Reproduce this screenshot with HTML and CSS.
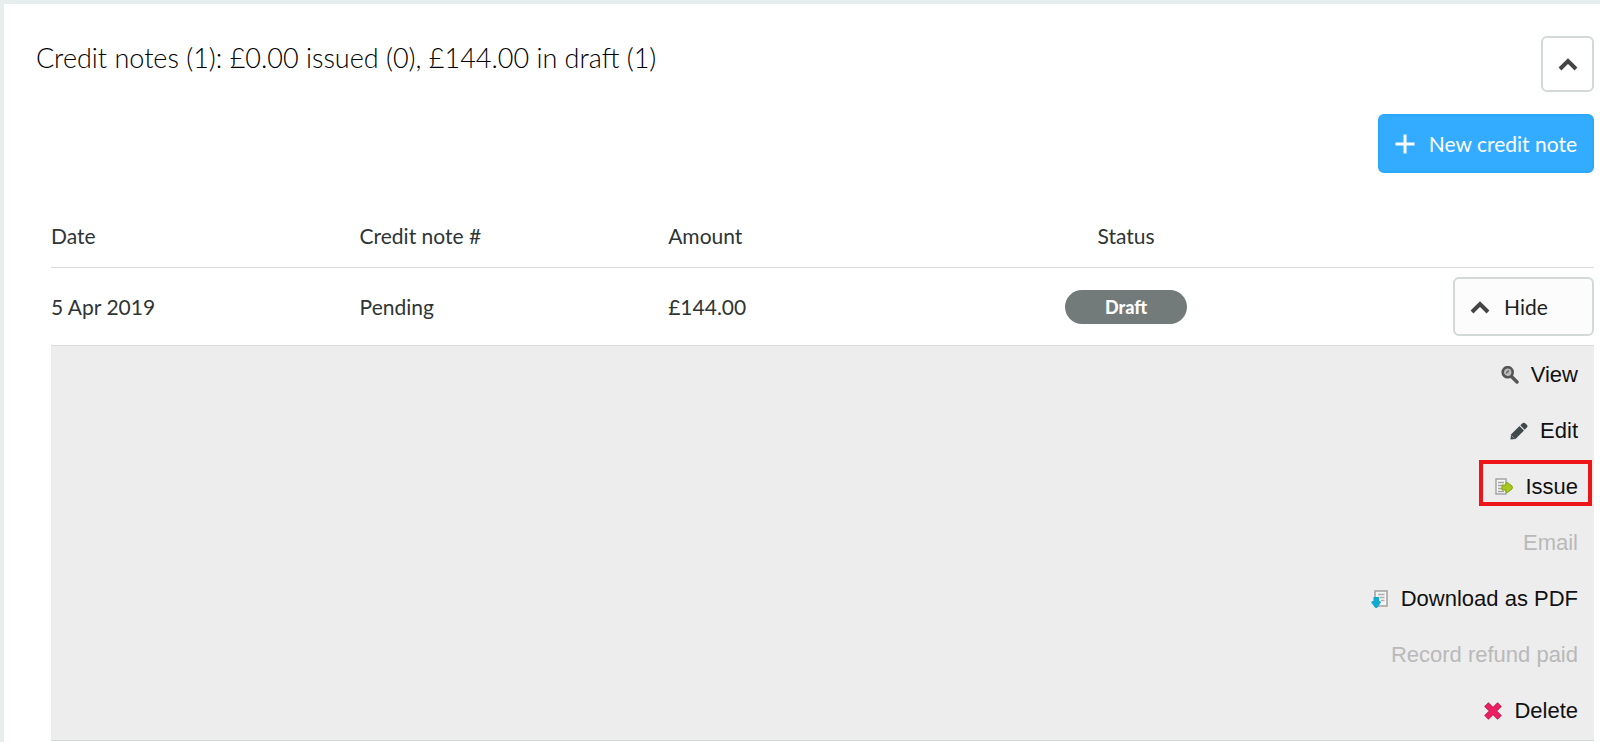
FILE: index.html
```html
<!DOCTYPE html>
<html lang="en-GB">
<head>
<meta charset="utf-8">
<title>Credit notes</title>
<link rel="stylesheet" href="styles.css">
</head>
<body>
<main class="panel">
  <header class="panel-head">
    <h1 class="panel-title">Credit notes (1): £0.00 issued (0), £144.00 in draft (1)</h1>
    <button class="btn btn-toggle" type="button" aria-label="Collapse credit notes">
      <svg class="chevron" viewBox="0 0 20 14" aria-hidden="true"><path d="M2 12 L10 4 L18 12"/></svg>
    </button>
  </header>
  <div class="toolbar">
    <button class="btn btn-primary" type="button">
      <svg class="plus" viewBox="0 0 20 20" aria-hidden="true"><path d="M10 0.5V19.5M0.5 10H19.5"/></svg>
      New credit note
    </button>
  </div>
  <table class="notes">
    <thead>
      <tr>
        <th scope="col">Date</th>
        <th scope="col">Credit note #</th>
        <th scope="col">Amount</th>
        <th scope="col" class="status">Status</th>
        <td></td>
      </tr>
    </thead>
    <tbody>
      <tr class="note">
        <td>5 Apr 2019</td>
        <td>Pending</td>
        <td>£144.00</td>
        <td class="status"><span class="badge">Draft</span></td>
        <td class="toggle-cell">
          <button class="btn btn-hide" type="button" aria-expanded="true">
            <svg class="chevron" viewBox="0 0 20 14" aria-hidden="true"><path d="M2 12 L10 4 L18 12"/></svg>
            Hide
          </button>
        </td>
      </tr>
      <tr class="actions-row">
        <td colspan="5">
          <ul class="actions">
            <li><a class="action" href="#view">
              <svg class="icon" viewBox="0 0 18 18" aria-hidden="true"><path d="M10.5 10.5L16 16" stroke="#555" stroke-width="3.4" stroke-linecap="round"/><circle cx="6.7" cy="6.2" r="5" fill="#bcbcbc" stroke="#555" stroke-width="2.6"/><path d="M5 8C4.200 5 7 3.500 8.500 4.700C7.500 6.500 7 7 5 8Z" fill="#777"/></svg>
              View</a></li>
            <li><a class="action" href="#edit">
              <svg class="icon" viewBox="0 0 18 18" aria-hidden="true"><path d="M0.500 17.500L1 12.500L9.500 4L14 8.500L5.500 17Z" fill="#3e4a4b"/><path d="M10.300 3.300L12.800 1Q14 0.200 15.200 1.200L17 3Q18 4.200 17 5.300L14.700 7.700Z" fill="#3e4a4b"/><path d="M1.500 13.500L4.500 16.500" stroke="#8b9293" stroke-width="1"/></svg>
              Edit</a></li>
            <li><a class="action action-marked" href="#issue">
              <svg class="icon" viewBox="0 0 18 18" aria-hidden="true"><rect x="1" y="1" width="10" height="15" fill="#f7f7f7" stroke="#a5a5a5" stroke-width="1.500"/><path d="M3 4.500H9M3 7.500H7M3 10.500H7M3 13.500H9" stroke="#a5a5a5" stroke-width="1.300"/><path d="M7 7H11V5Q11 3.500 12.500 4.500L17 8Q18 9.500 17 11L12.500 14.500Q11 15.500 11 14V12H7Z" fill="#a8c61b" stroke="#86a31a" stroke-width="1" stroke-linejoin="round"/></svg>
              Issue</a></li>
            <li><span class="action action-off">Email</span></li>
            <li><a class="action" href="#pdf">
              <svg class="icon" viewBox="0 0 18 18" aria-hidden="true"><rect x="4" y="1" width="12" height="15" fill="#f5f5f5" stroke="#a5a5a5" stroke-width="1.600"/><path d="M7 4.500H13.500M8.500 7.500H13.500M10 10.500H13.500" stroke="#b0b0b0" stroke-width="1.300"/><path d="M2.500 7H8V11H9Q10.500 11.500 9.500 13L6.500 17.500Q5.200 18.500 4 17.500L0.500 13Q0 11.500 1.500 11H2.500Z" fill="#10a9d0"/></svg>
              Download as PDF</a></li>
            <li><span class="action action-off">Record refund paid</span></li>
            <li><a class="action" href="#delete">
              <svg class="icon" viewBox="0 0 18 18" aria-hidden="true"><path d="M2.300 2.300L15.700 15.700M15.700 2.300L2.300 15.700" stroke="#c71850" stroke-width="6"/><path d="M2.800 2.800L15.200 15.200M15.200 2.800L2.800 15.200" stroke="#eb1f62" stroke-width="4.400"/></svg>
              Delete</a></li>
          </ul>
        </td>
      </tr>
    </tbody>
  </table>
</main>
</body>
</html>
```
FILE: styles.css
```css
* {
  box-sizing: border-box;
}

body {
  margin: 0;
  padding: 4px 0 0 4px;
  background: #e6eeee;
  color: #2e3535;
  font-family: Lato, "Open Sans", sans-serif;
  font-size: 21px;
}

.panel {
  min-height: calc(100vh - 4px);
  padding: 32px 6px 0 32px;
  background: #fff;
}

.panel-head {
  display: flex;
  justify-content: space-between;
  align-items: flex-start;
}

.panel-title {
  margin: 4px 0 0;
  color: #000;
  font-size: 27px;
  font-weight: 300;
  line-height: 36px;
}

.btn {
  display: inline-flex;
  align-items: center;
  border: 2px solid #d3d8d8;
  border-radius: 6px;
  background: #fff;
  color: #1d2222;
  font: inherit;
  cursor: pointer;
}

.btn-toggle {
  justify-content: center;
  width: 53px;
  height: 56px;
  padding: 0;
}

.chevron {
  width: 20px;
  height: 14px;
  fill: none;
  stroke: #444;
  stroke-width: 4;
}

.toolbar {
  display: flex;
  justify-content: flex-end;
  margin-top: 22px;
}

.btn-primary {
  gap: 14px;
  height: 59px;
  padding: 0 15px;
  border-color: #2ba7fb;
  background: #33acff;
  color: #fff;
}

.plus {
  width: 20px;
  height: 20px;
  stroke: #fff;
  stroke-width: 3;
}

.notes {
  width: calc(100% - 15px);
  margin: 31px 0 0 15px;
  border-collapse: separate;
  border-spacing: 0;
  table-layout: fixed;
}

.notes th,
.notes td {
  padding: 0;
  border-bottom: 1px solid #d8dcdc;
  font-weight: 400;
  text-align: left;
}

.notes thead th {
  height: 64px;
}

.notes .note td {
  height: 78px;
}

.notes .status {
  padding-right: 10px;
  text-align: center;
}

.badge {
  display: inline-block;
  width: 122px;
  border-radius: 17px;
  background: #737a7a;
  color: #fff;
  font-size: 18px;
  font-weight: 900;
  line-height: 34px;
}

.notes .toggle-cell {
  text-align: right;
}

.btn-hide {
  gap: 14px;
  width: 141px;
  height: 59px;
  padding: 0 15px;
  background: #fcfcfc;
  vertical-align: middle;
}

.notes .actions-row td {
  border-bottom-color: #d3d8d8;
  background: #ededed;
}

.actions {
  display: flex;
  flex-direction: column;
  align-items: flex-end;
  margin: 0;
  padding: 1px 2px;
  list-style: none;
  font-family: "Liberation Sans", Arial, sans-serif;
  font-size: 22px;
}

.actions li {
  display: flex;
  align-items: center;
  height: 56px;
}

.action {
  display: flex;
  align-items: center;
  gap: 12px;
  padding: 0 14px;
  color: #111;
  line-height: 46px;
  text-decoration: none;
}

.action-off {
  color: #b9b9b9;
}

.action-marked {
  margin-bottom: 8px;
  border: 4px solid #ee1519;
  padding: 8px 10px 0 12px;
  line-height: 30px;
}

.icon {
  width: 18px;
  height: 18px;
  fill: none;
}
```
